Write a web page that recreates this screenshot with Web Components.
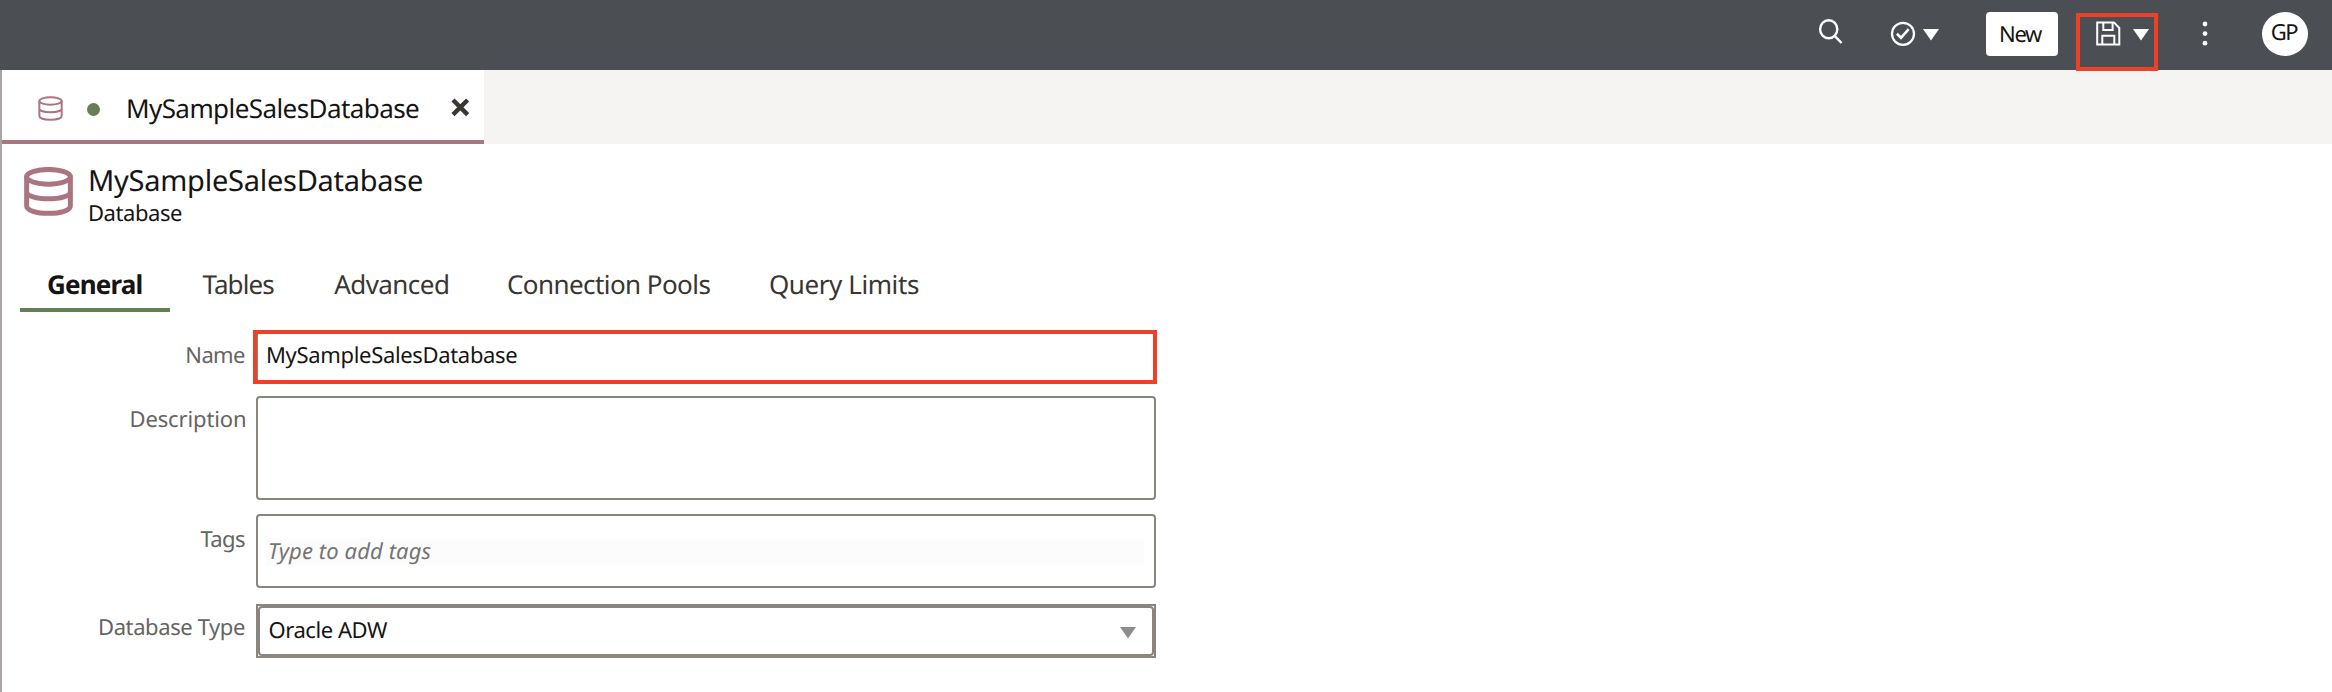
<!DOCTYPE html>
<html lang="en">
<head>
<meta charset="utf-8">
<title>MySampleSalesDatabase</title>
<style>
html,body{margin:0;height:100%;overflow:hidden;background:#fff}
body{font-family:"Noto Sans","Open Sans",sans-serif;color:#161513}
</style>
</head>
<body>
<model-app></model-app>
<script>
const define = (name, html, setup) => {
  const t = document.createElement('template');
  t.innerHTML = html;
  customElements.define(name, class extends HTMLElement {
    constructor() {
      super();
      this.attachShadow({mode: 'open'}).appendChild(t.content.cloneNode(true));
    }
    connectedCallback() { if (setup) setup(this); }
  });
};

/* One line of text tracked so that its ink spans exactly the given width. */
const ctx = document.createElement('canvas').getContext('2d');
define('fit-text', `<style>
:host{display:block;white-space:nowrap;flex:none}
span{display:block;text-rendering:geometricPrecision}
</style><span><slot></slot></span>`, el => {
  const size = +el.getAttribute('size'), width = +el.getAttribute('width');
  const weight = el.getAttribute('weight') || '400', style = el.getAttribute('slant') || 'normal';
  const text = el.textContent;
  ctx.font = `${style} ${weight} ${size}px "Noto Sans", sans-serif`;
  ctx.textRendering = 'geometricPrecision';
  const m = ctx.measureText(text);
  const ink = m.actualBoundingBoxRight + m.actualBoundingBoxLeft;
  const s = el.shadowRoot.querySelector('span').style;
  s.font = `${style} ${weight} ${size}px/${el.getAttribute('line') || Math.round(size * 1.38)}px "Noto Sans", sans-serif`;
  s.letterSpacing = ((width - ink) / (text.length - 1)).toFixed(3) + 'px';
  s.marginLeft = m.actualBoundingBoxLeft + 'px';
  el.style.width = width + 'px';
});

define('db-icon', `<style>:host{display:block;flex:none}svg{display:block;width:100%;height:100%}</style>
<svg viewBox="0 0 48 48" fill="none" stroke="#aa7480"><g>
<ellipse cx="24" cy="9.6"/><path d="M2.6 9.6V38.2C2.6 42.4 12 45.4 24 45.4S45.4 42.4 45.4 38.2V9.6M2.6 24.5C2.6 28.3 12 31.2 24 31.2S45.4 28.3 45.4 24.5"/></g></svg>`, el => {
  const w = +el.getAttribute('weight');
  el.shadowRoot.querySelector('g').setAttribute('stroke-width', w);
  const e = el.shadowRoot.querySelector('ellipse');
  e.setAttribute('rx', 21.4); e.setAttribute('ry', 7.2);
});

define('caret-down', `<style>:host{display:block;flex:none;width:16px;height:11.5px;color:#fff}svg{display:block;width:100%;height:100%}</style>
<svg viewBox="0 0 16 11.5" preserveAspectRatio="none"><path d="M0 0H16L8 11.5Z" fill="currentColor"/></svg>`);

define('top-bar', `<style>
:host{display:flex;justify-content:flex-end;align-items:flex-start;height:70px;background:#4b4e53;box-sizing:border-box;padding-right:24px}
svg{display:block;flex:none;fill:none;stroke:#fff}
caret-down{margin-top:29px}
.search{margin:18px 47px 0 0}
.check{margin:21px 7px 0 0}
.new{width:72px;height:44px;background:#fff;border-radius:4px;margin:12px 18px 0 47.5px;display:flex;justify-content:center;box-sizing:border-box;padding-top:6.5px}
.save{position:relative;display:flex;width:82px;height:58px;margin-top:13px;box-sizing:border-box;border:4px solid #ee4027}
.save svg{margin:4px 0 0 16px}
.save caret-down{margin:12px 0 0 12.3px}
.dots{margin:20px 54px 0 44px}
.avatar{width:46px;height:44px;border-radius:50%;background:#fff;margin-top:12px;display:flex;justify-content:center;box-sizing:border-box;padding-top:4.5px}
</style>
<svg class="search" width="25" height="27" stroke-width="2.4"><ellipse cx="10.7" cy="11.2" rx="8.6" ry="9"/><path d="M16.6 17.8L23.6 25"/></svg>
<svg class="check" width="26" height="26" stroke-width="2.3"><circle cx="13" cy="12.8" r="11"/><path d="M6.9 12.8L11 16.8L18.7 8.2" stroke-width="2.6"/></svg>
<caret-down></caret-down>
<div class="new"><fit-text size="22" width="42" line="30">New</fit-text></div>
<div class="save"><svg width="25" height="25" stroke-width="2"><path d="M1.2 1.4H18L23.3 7V23.6H1.2ZM7.3 1.4V9H16.6V1.4M6.3 23.6V14.7H18.3V23.6"/></svg><caret-down></caret-down></div>
<svg class="dots" width="6" height="28"><g fill="#fff" stroke="none"><circle cx="3" cy="4" r="2.4"/><circle cx="3" cy="13.6" r="2.4"/><circle cx="3" cy="23.2" r="2.4"/></g></svg>
<div class="avatar"><fit-text size="22" width="26.5" line="30">GP</fit-text></div>`);

define('file-tabs', `<style>
:host{display:flex;height:74px;background:#f5f4f2}
.tab{display:flex;align-items:flex-start;width:482px;height:74px;box-sizing:border-box;border-bottom:4px solid #aa7480;background:#fff}
db-icon{width:25px;height:25px;margin:25.5px 0 0 36px}
i{width:13px;height:13px;border-radius:50%;background:#677f54;margin:33px 28px 0 24px}
fit-text{margin-top:20px}
svg{margin:27px 0 0 31.2px;display:block}
</style>
<div class="tab"><db-icon weight="3.8"></db-icon><i></i><fit-text size="26" width="291" line="36">MySampleSalesDatabase</fit-text>
<svg width="20" height="20" stroke="#3a3632" stroke-width="4.4"><path d="M3 3L17.6 17.6M17.6 3L3 17.6"/></svg></div>`);

define('object-head', `<style>
:host{display:flex;height:106px}
db-icon{width:49px;height:49px;margin:23px 17px 0 22px}
.t{display:flex;flex-direction:column;padding-top:17px}
.s{margin-top:-3px}
</style><db-icon weight="4.9"></db-icon><div class="t"><fit-text size="29" width="332" line="40">MySampleSalesDatabase</fit-text><fit-text class="s" size="22" width="92" line="30">Database</fit-text></div>`);

define('section-tabs', `<style>
:host{display:flex;height:62px;padding-left:18px}
div{box-sizing:border-box;height:62px;padding:16px 0 0;color:#3a3632;margin-left:60px}
.on{width:150px;padding-left:28px;margin-left:0;border-bottom:4px solid #677f54;color:#161513}
</style>
<div class="on"><fit-text size="26" weight="700" width="93.5" line="36">General</fit-text></div>
<div style="margin-left:32.5px"><fit-text size="26" width="71.7" line="36">Tables</fit-text></div>
<div><fit-text size="26" width="113.7" line="36">Advanced</fit-text></div>
<div><fit-text size="26" width="202.5" line="36">Connection Pools</fit-text></div>
<div style="margin-left:59.5px"><fit-text size="26" width="149" line="36">Query Limits</fit-text></div>`);

define('form-row', `<style>
:host{display:grid;grid-template-columns:243px 900px;column-gap:11px}
.l{display:flex;justify-content:flex-end;color:#656462}
</style><div class="l"><slot name="label"></slot></div><slot></slot>`);

define('text-box', `<style>
:host{display:block;box-sizing:border-box;border:2px solid #8b8580;border-radius:4px;background:#fff;position:relative}
:host([marked])::after{content:"";position:absolute;inset:-3px -3px -3px -5px;border:4px solid #ee4027}
</style><slot></slot>`);

define('select-box', `<style>
:host{display:block;box-sizing:border-box;height:54px;border:2px solid #8b8580;background:#fff}
div{display:flex;box-sizing:border-box;height:50px;border:2px solid #8b8580;border-radius:4px;padding:6.5px 16.5px 0 9.5px;justify-content:space-between}
caret-down{color:#8d8d8d;margin-top:12.5px}
</style><div><slot></slot><caret-down></caret-down></div>`);

define('db-form', `<style>
:host{display:flex;flex-direction:column;padding-top:19px}
.band{display:block;background:#fcfcfc;margin:22px 10px 0 8px;height:28px;padding-left:3px;color:#757472}
.band fit-text{position:relative;top:-2px}
</style>
<form-row><fit-text slot="label" style="margin-top:9px" size="22" width="57.7" line="30">Name</fit-text><text-box marked style="height:52px"><fit-text style="margin:7px 0 0 10px" size="22" width="249.3" line="30">MySampleSalesDatabase</fit-text></text-box></form-row>
<form-row style="margin-top:13px"><fit-text slot="label" style="margin-top:8px" size="22" width="113.5" line="30">Description</fit-text><text-box style="height:104px"></text-box></form-row>
<form-row style="margin-top:14px"><fit-text slot="label" style="margin-top:10px" size="22" width="44.5" line="30">Tags</fit-text><text-box style="height:74px"><span class="band"><fit-text size="22" slant="italic" width="162.5" line="30">Type to add tags</fit-text></span></text-box></form-row>
<form-row style="margin-top:16px"><fit-text slot="label" style="margin-top:8px" size="22" width="145" line="30">Database Type</fit-text><select-box><fit-text size="22" width="118.5" line="30">Oracle ADW</fit-text></select-box></form-row>`);

define('model-app', `<style>
:host{display:flex;flex-direction:column;height:100vh}
top-bar{flex:none;position:relative;z-index:1}
main{flex:1;display:flex;flex-direction:column;border-left:2px solid #aaa5a1;background:#fff}
</style><top-bar></top-bar><main><file-tabs></file-tabs><object-head></object-head><section-tabs></section-tabs><db-form></db-form></main>`);
</script>
</body>
</html>
